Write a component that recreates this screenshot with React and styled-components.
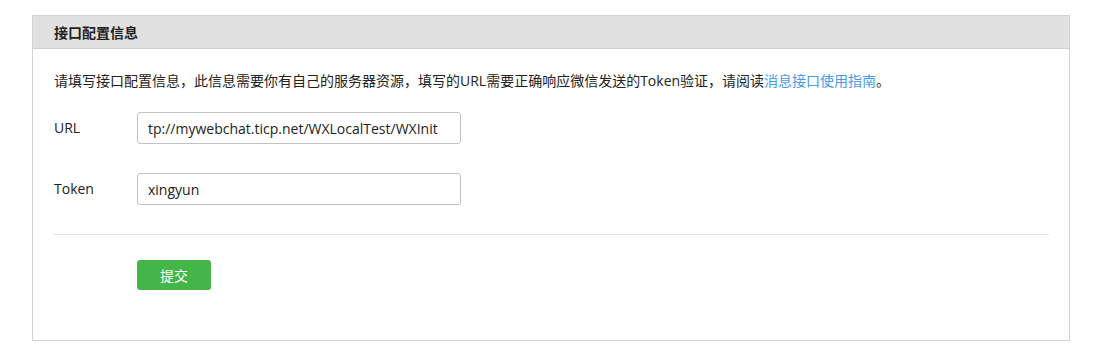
import styled, { createGlobalStyle } from "styled-components";

const Global = createGlobalStyle`
  html, body { margin: 0; padding: 0; background: #fff; }
  body {
    font-family: "Open Sans", "Noto Sans CJK SC", sans-serif;
    color: #222;
  }
`;

const Page = styled.div`
  padding: 15px 0 0 32px;
`;

const Panel = styled.section`
  width: 1038px;
  border: 1px solid #d3d3d3;
  box-sizing: border-box;
  height: 326px;
`;

const PanelHead = styled.header`
  height: 32px;
  background: #e1e1e1;
  border-bottom: 1px solid #d0d0d0;
  display: flex;
  align-items: center;
  padding-left: 21px;
  font-size: 14px;
  font-weight: bold;
  color: #222;
  font-family: "Noto Sans CJK SC", sans-serif;
`;

const PanelBody = styled.div`
  padding: 22px 20px 0 21px;
`;

const Desc = styled.p`
  margin: 0;
  font-size: 14px;
  line-height: 20px;
  color: #222;

  a {
    color: #459ae9;
    text-decoration: none;
  }
`;

const Form = styled.div`
  margin-top: 21px;
  display: flex;
  flex-direction: column;
  gap: 29px;
`;

const Row = styled.div`
  display: flex;
  align-items: center;
`;

const Label = styled.label`
  width: 83px;
  font-size: 14px;
  margin-top: -1px;
  color: #222;
`;

const Input = styled.input`
  width: 324px;
  height: 32px;
  box-sizing: border-box;
  border: 1px solid #c2c2c2;
  border-radius: 3px;
  padding: 0 10px;
  font-family: "Open Sans", "Noto Sans CJK SC", sans-serif;
  font-size: 14px;
  color: #222;
  outline: none;
`;

const Divider = styled.hr`
  margin: 29px 0 0 0;
  border: 0;
  border-top: 1px solid #e4e4e4;
`;

const Actions = styled.div`
  padding: 25px 0 0 83px;
`;

const Button = styled.button`
  width: 74px;
  height: 30px;
  border: 0;
  border-radius: 3px;
  background: #44b549;
  color: #fff;
  font-size: 14px;
  font-family: "Noto Sans CJK SC", sans-serif;
  cursor: pointer;
`;

export default function App() {
  return (
    <>
      <Global />
      <Page>
        <Panel>
          <PanelHead>接口配置信息</PanelHead>
          <PanelBody>
            <Desc>
              请填写接口配置信息，此信息需要你有自己的服务器资源，填写的URL需要正确响应微信发送的Token验证，请阅读
              <a href="#">消息接口使用指南</a>。
            </Desc>
            <Form>
              <Row>
                <Label>URL</Label>
                <Input defaultValue="tp://mywebchat.ticp.net/WXLocalTest/WXInit" />
              </Row>
              <Row>
                <Label>Token</Label>
                <Input defaultValue="xingyun" />
              </Row>
            </Form>
            <Divider />
            <Actions>
              <Button>提交</Button>
            </Actions>
          </PanelBody>
        </Panel>
      </Page>
    </>
  );
}
